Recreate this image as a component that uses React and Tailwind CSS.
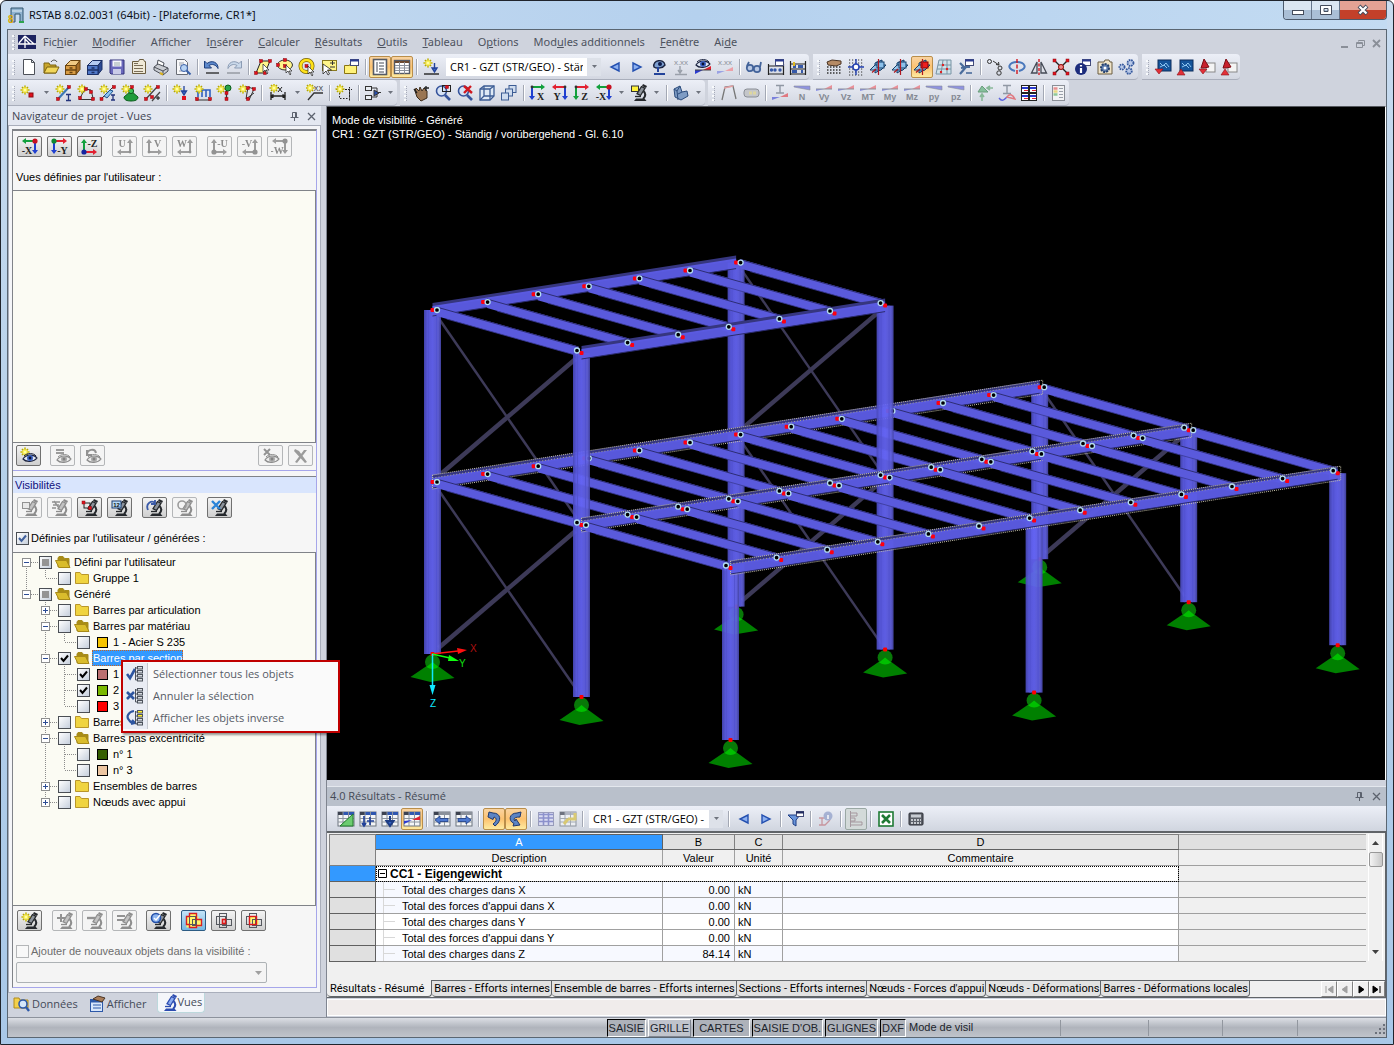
import { useState } from 'react'
import clsx from 'clsx'

/* ---------- icon parts ---------- */

const Star = ({ x = 5, y = 5 }) => (
  <g transform={`translate(${x} ${y})`}>
    <path d="M0-4.5V4.5M-4.5 0H4.5M-3-3L3 3M3-3L-3 3" stroke="#b5a800" strokeWidth="1.6" />
    <path d="M0-3.5V3.5M-3.5 0H3.5M-2-2L2 2M2-2L-2 2" stroke="#fff04a" strokeWidth="1.1" />
    <circle r="1.6" fill="#ffffa0" />
  </g>
)

const Dot = ({ x, y }) => <rect x={x - 1.5} y={y - 1.5} width="3" height="3" fill="#e0101c" stroke="#8c0a10" strokeWidth=".5" />

const Scope = ({ c = '#25282c', hi = '#8c929a' }) => (
  <g>
    <path d="M13.500 7c2.500 2.500 2 5.500-.5 8" stroke={c} strokeWidth="2" fill="none" />
    <path d="M11.500 2.500l3.500 1.800-4.500 7.200-3.500-1.800z" fill={hi} stroke={c} strokeWidth="1.300" />
    <path d="M12.500 1l4 2" stroke={c} strokeWidth="2.200" />
    <path d="M5 12.500h6" stroke={c} strokeWidth="1.300" />
    <path d="M4 17l2-2.500h8.500l2 2.500z" fill={c} />
  </g>
)

const Eye = ({ x = 9, y = 9 }) => (
  <g transform={`translate(${x} ${y})`}>
    <path d="M-7 1C-4-4 4-4 7 0C4 4-4 4.500-7 1z" fill="#dfe6f4" stroke="#1c2440" strokeWidth="1.200" />
    <circle r="3" fill="#3d63c4" />
    <circle r="1.400" fill="#0a1030" />
    <path d="M-6-2C-3-5.500 4-5 6-2" stroke="#1c2440" fill="none" />
  </g>
)

const Grid = ({ x = 1, y = 2, w = 16, h = 14, head = '#2f57b0' }) => (
  <g>
    <rect x={x} y={y} width={w} height={h} fill="#f4f6f8" stroke="#6c747e" />
    <rect x={x} y={y} width={w} height="3" fill="#3c4250" />
    <rect x={x + 5} y={y} width={w - 5} height="3" fill={head} />
    <path d={`M${x} ${y + 6.5}h${w}M${x} ${y + 10}h${w}M${x + 5} ${y}v${h}M${x + 10.5} ${y}v${h}`} stroke="#8b939d" />
  </g>
)

const Lens = () => (
  <g>
    <circle cx="7.500" cy="7" r="5" fill="#d4e2f6" fillOpacity=".8" stroke="#36549c" strokeWidth="1.600" />
    <path d="M11 11l5 5" stroke="#36549c" strokeWidth="2.600" />
  </g>
)

const Cube = ({ hot }) => (
  <g strokeWidth="1">
    <path d="M6 5l7-3v9l-7 4z" fill="#7db8e6" stroke="#123c68" />
    <path d="M1 12l5-5h11l-5 5z" fill="#9ccaf0" fillOpacity=".85" stroke="#123c68" />
    <rect x="8" y="4" width="7" height="6" fill={hot ? '#f02020' : '#8cc0ea'} stroke={hot ? '#800' : '#123c68'} />
    <path d="M9.500 1v16M3 14.500L7 11" stroke="#b01820" strokeWidth="1.200" />
  </g>
)

const Wedge = ({ label, blue }) => (
  <g>
    {blue ? (
      <path d="M1 2h16v4L1 3z" fill="#8f93e0" stroke="#8a8f9a" strokeWidth=".6" />
    ) : (
      <g>
        <path d="M1 7V5h8z" fill="#8a90e6" />
        <path d="M9 5l8-4v4z" fill="#e89098" />
        <path d="M1 5h16" stroke="#8a8f9a" />
      </g>
    )}
    <text x="9" y="16" textAnchor="middle" fontSize="9" fontWeight="bold" fill="#858a94" fontFamily="Liberation Sans, sans-serif">{label}</text>
  </g>
)

// view direction icons: two arrows leaving a corner plus the axis letter
const Axis = ({ label, h = '#e22030', v = '#1f3fd0', corner = 'tl', node }) => {
  const left = corner[1] === 'l'
  const top = corner[0] === 't'
  const cx = left ? 3 : 14
  const cy = top ? 3 : 14
  const hx = left ? 16 : 1
  const vy = top ? 16 : 1
  const s = left ? -1 : 1
  const t = top ? -1 : 1
  return (
    <g>
      <path d={`M${cx} ${cy}H${hx + s * 2}`} stroke={h} strokeWidth="2" />
      <path d={`M${cx} ${cy}V${vy + t * 2}`} stroke={v} strokeWidth="2" />
      <path d={`M${hx} ${cy}l${s * 4}-3v6z`} fill={h} />
      <path d={`M${cx} ${vy}l-3 ${t * 4}h6z`} fill={v} />
      <circle cx={cx} cy={cy} r={node ? 2.6 : 1.4} fill={node || '#333'} />
      <text x={left ? 11.5 : 6} y={top ? 15.5 : 9} textAnchor="middle" fontSize="10" fontFamily="Liberation Serif, serif" fontWeight="bold" fill="#222">{label}</text>
    </g>
  )
}

const Tree3 = ({ c = '#d8dce2' }) => (
  <g fill={c} stroke="#4c525c">
    <path d="M9.500 2v13M9.500 3h2M9.500 7h2M9.500 11h2M9.500 15h2" />
    <rect x="11.500" y="1.500" width="5" height="2.500" />
    <rect x="11.500" y="5.500" width="5" height="2.500" />
    <rect x="11.500" y="9.500" width="5" height="2.500" fill="#d8dce2" />
    <rect x="11.500" y="13.500" width="5" height="2.500" fill="#d8dce2" />
  </g>
)

// three overlapping frames; mode picks what is highlighted
const Squares = ({ mode }) => (
  <g fill="none">
    {mode === 'union' && <path d="M4.500 1.500h7v3h2v3h3v7h-6v1h-9v-11h3z" fill="#fff66a" />}
    {mode === 'diff' && <path d="M4.500 4.500h7v3h2v5h-6v-2h-3z" fill="#fff66a" />}
    <rect x="1.500" y="4.500" width="9" height="8" stroke="#55585e" />
    <rect x="4.500" y="1.500" width="7" height="14" stroke="#55585e" />
    <rect x="7.500" y="7.500" width="9" height="6" stroke="#55585e" />
    {mode === 'union' && <path d="M4.500 1.500h7v6h5v6h-5v2h-7v-3h-3v-8h3z" stroke="#d82020" strokeWidth="1.400" />}
    {mode === 'inter' && <rect x="7.500" y="7.500" width="3" height="4" stroke="#e01818" strokeWidth="1.600" />}
    {mode === 'diff' && <rect x="4.500" y="4.500" width="7" height="8" stroke="#e01818" strokeWidth="1.400" />}
  </g>
)

const Folder = ({ open }) => (
  <svg viewBox="0 0 16 14" className="h-[14px] w-4 shrink-0" fill="none">
    {open ? (
      <g>
        <path d="M3 12V3l1-1.500h4l1.500 2H14V12z" fill="#a88c14" stroke="#a58a1c" />
        <path d="M4 12.500L.5 5.500h11l3.500 7z" fill="#d9bc2c" stroke="#a88a18" />
      </g>
    ) : (
      <path d="M1.500 12.500v-11H6l1.500 2h7v9z" fill="#f0d440" stroke="#b9962a" />
    )}
  </svg>
)

const bluearrow = { fill: '#4c78d0', stroke: '#1c3c84', strokeWidth: 0.8 }

const icons = {
  logo: (
    <g>
      <rect y="2" width="18" height="14" fill="#1d2360" />
      <path d="M0 11h18M7 3v12M7 3L1 10M7 3l9 8M7 6l5 5" stroke="#fff" strokeWidth="1.300" />
    </g>
  ),
  app: (
    <g>
      <path d="M4 2h12v14h-3V8H8v8H4z" fill="#8fb2cf" stroke="#31546e" />
      <path d="M5 5h10" stroke="#e4f0f8" />
      <path d="M12 16h5" stroke="#2da44e" strokeWidth="2" />
      <text x="1" y="17" fontSize="10" fontWeight="bold" fill="#e0ac00" fontFamily="Liberation Sans, sans-serif">8</text>
    </g>
  ),
  nouveau: <path d="M3.500 1.500h8l3 3v12h-11zM11.500 1.500v3h3" fill="#fff" stroke="#4c5058" />,
  ouvrir: (
    <g>
      <path d="M2 15V5h5l1 2h6v8z" fill="#c9a62c" stroke="#7b6210" />
      <path d="M2 15l3-6h12l-3 6z" fill="#f1d65a" stroke="#7b6210" />
      <path d="M9 4c2-3 5-2 6 0" stroke="#444" fill="none" />
    </g>
  ),
  projet: (
    <g stroke="#6a4410">
      <path d="M1.500 7.500l5-5h9.500l-4 5z" fill="#f0ca84" />
      <path d="M12 7.500l4-5v9l-4 5z" fill="#a8702a" />
      <rect x="1.500" y="7.500" width="10.500" height="9" fill="#d89c44" />
      <path d="M2 12h10M5.500 10h3M5.500 14.500h3" strokeWidth="1.300" />
    </g>
  ),
  blocs: (
    <g stroke="#1b2f66">
      <path d="M1.500 7.500l5-5h9.500l-4 5z" fill="#b4caf2" />
      <path d="M12 7.500l4-5v9l-4 5z" fill="#2c4a94" />
      <rect x="1.500" y="7.500" width="10.500" height="9" fill="#5078c8" />
      <path d="M2 12h10M5.500 10h3M5.500 14.500h3" strokeWidth="1.300" />
    </g>
  ),
  enregistrer: (
    <g>
      <path d="M2 2h14v14H3l-1-1z" fill="#6a68bc" stroke="#33327a" />
      <rect x="4.500" y="2.500" width="9" height="6" fill="#f6f6fc" />
      <path d="M6 5h6M6 7h6" stroke="#9aa" />
      <rect x="5" y="11" width="8" height="5" fill="#c9cbe8" />
    </g>
  ),
  notes: (
    <g>
      <path d="M2.500 3.500h6l1-2h4l1 2h1v12h-13z" fill="#efe9d8" stroke="#6b5d40" />
      <path d="M4 7.500h9M4 10.500h9M4 13.500h9M4 5.500h4" stroke="#7a6e58" />
    </g>
  ),
  imprimer: (
    <g stroke="#4b4f58">
      <path d="M5 8l1-6 6 3-1 5z" fill="#fff" />
      <path d="M2 9l4-3 10 4v3l-5 4-9-5z" fill="#c9ccd2" />
      <path d="M2 9l9 4 5-3M11 13v4" fill="none" />
      <path d="M8 15l3 1.500" stroke="#d8b020" strokeWidth="2" />
    </g>
  ),
  apercu: (
    <g>
      <path d="M2.500 1.500h8l3 3v12h-11z" fill="#f8f8fa" stroke="#6a6e76" />
      <path d="M5 5h5M5 7h3M5 13h6" stroke="#9aa0aa" />
      <circle cx="10" cy="10" r="3.500" fill="#b8d4f4" stroke="#3a60a8" />
      <path d="M12.500 12.500l4 4" stroke="#3a60a8" strokeWidth="2" />
    </g>
  ),
  annuler: (
    <g>
      <path d="M1.500 3v7h7L6 7.500c3-2 7-1 9 3C15.500 4.500 9 1.500 4 5.500z" fill="#5c88cc" stroke="#1d3f7c" />
      <path d="M3 15h13" stroke="#222" strokeWidth="1.300" />
    </g>
  ),
  retablir: (
    <g>
      <path d="M16.500 3v7h-7L12 7.500c-3-2-7-1-9 3C2.500 4.500 9 1.500 14 5.500z" fill="#c9d8ea" stroke="#8c9cb4" />
      <path d="M2 15h13" stroke="#8c9098" strokeWidth="1.300" />
    </g>
  ),
  selparal: (
    <g>
      <path d="M2 15L7 3h9l-5 12z" fill="#fff58a" stroke="#222" />
      <Dot x={2} y={15} /><Dot x={7} y={3} /><Dot x={16} y={3} /><Dot x={11} y={15} />
      <path d="M9 6v8l2-2 2 4 1-1-2-3h3z" fill="#fff" stroke="#222" strokeWidth=".7" />
    </g>
  ),
  selellipse: (
    <g>
      <ellipse cx="9" cy="7" rx="7.500" ry="5" fill="#fff58a" stroke="#333" />
      <Dot x={2} y={7} /><Dot x={9} y={2} /><Dot x={9} y={8} />
      <path d="M10 7v8l2-2 2 4 1-1-2-3h3z" fill="#fff" stroke="#222" strokeWidth=".7" />
    </g>
  ),
  selanneau: (
    <g>
      <circle cx="8.500" cy="8" r="6" fill="none" stroke="#7a6400" strokeWidth="4" />
      <circle cx="8.500" cy="8" r="6" fill="none" stroke="#ffe21a" strokeWidth="2.600" />
      <Dot x={8.5} y={8} />
      <path d="M10 8v8l2-2 2 4 1-1-2-3h3z" fill="#fff" stroke="#222" strokeWidth=".7" />
    </g>
  ),
  selfenetre: (
    <g>
      <rect x="2.500" y="2.500" width="14" height="10" fill="#fff58a" stroke="#8a7a20" />
      <path d="M10 5h5M12.500 3v4M10 9h5" stroke="#333" />
      <path d="M3 6v10l3-3 2 4 1.500-1-2-4h4z" fill="#fff" stroke="#222" strokeWidth=".8" />
    </g>
  ),
  selspec: (
    <g>
      <path d="M2.500 7.500h5l1-2h3v2h3v8h-12z" fill="#fff27a" stroke="#8a7410" />
      <rect x="8.500" y="1.500" width="8" height="6" fill="#fff" stroke="#444c78" />
      <path d="M8 2.500h9" stroke="#2c3c90" strokeWidth="2" />
    </g>
  ),
  navigateur: (
    <g>
      <rect x="2.500" y="1.500" width="13" height="15" fill="#fff" stroke="#555b66" strokeWidth="1.600" />
      <path d="M6 4v10M8 5h5M8 8h5M8 11h5M8 14h5" stroke="#444a55" />
    </g>
  ),
  tableaux: (
    <g>
      <rect x="1.500" y="2.500" width="15" height="13" fill="#fff" stroke="#555b66" strokeWidth="1.400" />
      <path d="M2 4h14" stroke="#6c4a30" strokeWidth="2" />
      <path d="M2 7.500h14M2 10h14M2 12.500h14M6.500 4v12M11.500 4v12" stroke="#8a909a" />
    </g>
  ),
  chargenouv: (
    <g>
      <Star x={6} y={5} />
      <path d="M12.500 5v6M10 10l2.500 4 2.500-4z" stroke="#23439a" strokeWidth="1.400" fill="#3c68c8" />
      <path d="M2 16h15" stroke="#222" strokeWidth="1.400" />
    </g>
  ),
  prec: <path d="M13 5v8L5 9z" fill="#8cb0f0" stroke="#2450b0" strokeWidth="1.400" />,
  suiv: <path d="M5 5v8l8-4z" fill="#8cb0f0" stroke="#2450b0" strokeWidth="1.400" />,
  vuecharge: (
    <g>
      <path d="M4 9C2 2 14 0 15 7c-2 3-8 4-11 2z" fill="#7d9fd0" stroke="#1c2440" strokeWidth="1.400" />
      <circle cx="10" cy="6" r="2" fill="#0c1a4a" />
      <path d="M8 9v5M4 16h11" stroke="#23439a" strokeWidth="2" />
    </g>
  ),
  valcharge: (
    <g>
      <text x="9" y="7" textAnchor="middle" fontSize="8" fill="#8d929c" fontFamily="Liberation Sans, sans-serif">x.xx</text>
      <path d="M8 8v6M6 12l2 3 2-3M3 16.500h12" stroke="#9aa0aa" strokeWidth="1.400" fill="none" />
    </g>
  ),
  vueres: (
    <g>
      <Eye x={9} y={6} />
      <path d="M1 16v-4h8z" fill="#2a3ad0" />
      <path d="M9 12l8-4v4z" fill="#e02030" />
      <path d="M1 12h16" stroke="#444" />
    </g>
  ),
  valres: (
    <g>
      <text x="9" y="7" textAnchor="middle" fontSize="8" fill="#8d929c" fontFamily="Liberation Sans, sans-serif">x.xx</text>
      <path d="M1 16v-3h8z" fill="#9aa2e4" />
      <path d="M9 13l8-4v4z" fill="#eca0a8" />
    </g>
  ),
  lunettes: (
    <g fill="none" stroke="#43639a" strokeWidth="1.800">
      <circle cx="5" cy="10" r="3.200" fill="#b8c8e4" />
      <circle cx="12" cy="11" r="3.200" fill="#b8c8e4" />
      <path d="M2 8l2-4M15 9l1-5M8 10h1" />
    </g>
  ),
  calcul1: (
    <g>
      <path d="M1.500 6v11M16.500 6v11M1 8h16M1 16h16" stroke="#222" strokeWidth="1.200" />
      <circle cx="4.500" cy="12" r="1.700" fill="#3558a8" /><circle cx="8" cy="12" r="1.700" fill="#3558a8" /><circle cx="13" cy="12" r="1.700" fill="#3558a8" />
      <rect x="8.500" y="1.500" width="8" height="6" fill="#fff" stroke="#444c78" />
      <path d="M8 2.500h9" stroke="#2c3c90" strokeWidth="2" />
    </g>
  ),
  calcul2: (
    <g>
      <path d="M1.500 3v14M16.500 3v14M1 6h16M1 11h16M1 16h16" stroke="#222" strokeWidth="1.200" />
      <path d="M4 8.500h3M9 8.500h5M3 13.500h5M12 13.500h2" stroke="#3558a8" strokeWidth="3" />
      <path d="M5 4v4" stroke="#e0b820" strokeWidth="2" />
    </g>
  ),
  grillemain: (
    <g>
      <path d="M2 9h14M2 12h14M2 15h14" stroke="#333" strokeDasharray="1.500 1.500" strokeWidth="1.400" />
      <path d="M2 4l5-2 9 1v3l-5 2-8-1z" fill="#b58a64" stroke="#4a3424" />
    </g>
  ),
  grille: (
    <g>
      <path d="M2 2h15M2 5h15M2 8h15M2 11h15M2 14h15M2 17h15" stroke="#333" strokeDasharray="1.200 1.800" />
      <path d="M9 1v16M1 9h16" stroke="#2340b0" strokeWidth="1.400" />
      <circle cx="9" cy="9" r="3" fill="#fff" stroke="#2340b0" strokeWidth="1.400" />
    </g>
  ),
  plan1: <Cube />,
  plan2: <Cube />,
  plan4: <Cube hot />,
  surface: (
    <g>
      <path d="M4 2h12v14H1z" fill="#cfe2ea" stroke="#7894a4" />
      <path d="M8 2L6 16M12 2v14M3 7h13M2 11h14" stroke="#7894a4" />
      <circle cx="8" cy="7" r="1.200" fill="#d22" /><circle cx="12" cy="11" r="1.200" fill="#d22" /><circle cx="6" cy="14" r="1.200" fill="#d22" />
    </g>
  ),
  outilscao: (
    <g>
      <path d="M3 16l6-7M3 5l4 4h6M9 9l-5 1" stroke="#4a6c9c" strokeWidth="2.200" />
      <rect x="8.500" y="1.500" width="8" height="6" fill="#fff" stroke="#444c78" />
      <path d="M8 2.500h9" stroke="#2c3c90" strokeWidth="2" />
      <path d="M9 15h6" stroke="#4a6c9c" strokeWidth="1.600" />
    </g>
  ),
  copier: (
    <g fill="none" stroke="#333">
      <circle cx="3.500" cy="3.500" r="2" /><circle cx="14" cy="10" r="2" /><circle cx="13" cy="15" r="2.200" />
      <path d="M7 3l6 4M13 7l-3-.5M13 7l-.5-3" />
    </g>
  ),
  pivoter: (
    <g fill="none">
      <path d="M7 13C-3 10 2 4 9 4s12 6 2 9" stroke="#4a78bc" strokeWidth="2" />
      <path d="M9 1v16" stroke="#d01820" strokeWidth="1.400" strokeDasharray="4 1.500" />
    </g>
  ),
  miroir: (
    <g fill="none">
      <path d="M7 15V4L1.500 15zM11 15V4l5.500 11z" stroke="#444a55" strokeWidth="1.300" />
      <path d="M9 1v16" stroke="#d01820" strokeWidth="1.400" strokeDasharray="3 1.500" />
    </g>
  ),
  connecter: (
    <g>
      <path d="M2 2l14 14M16 2L2 16" stroke="#222" strokeWidth="1.400" />
      <circle cx="9" cy="9" r="2.500" fill="#e88" stroke="#900" />
      <Dot x={2.5} y={2.5} /><Dot x={15.5} y={2.5} /><Dot x={2.5} y={15.5} /><Dot x={15.5} y={15.5} />
    </g>
  ),
  info: (
    <g>
      <rect x="8.500" y="1.500" width="8" height="6" fill="#fff" stroke="#444c78" />
      <path d="M8 2.500h9" stroke="#2c3c90" strokeWidth="2" />
      <circle cx="7" cy="11" r="6" fill="#1c2c7c" />
      <path d="M7 10v5M7 7v1.500" stroke="#fff" strokeWidth="2.200" />
    </g>
  ),
  module: (
    <g>
      <path d="M2 4h6l1-2h4l1 2h2v12H2z" fill="#efe3c8" stroke="#6b5d40" />
      <circle cx="9" cy="10" r="4" fill="#5d7cae" stroke="#26406c" strokeWidth="2" strokeDasharray="2 1" />
      <circle cx="9" cy="10" r="1.500" fill="#fff" />
    </g>
  ),
  engrenages: (
    <g fill="#b9c9e8" stroke="#35589c" strokeWidth="1.800" strokeDasharray="1.600 .8">
      <circle cx="4" cy="9" r="2.600" /><circle cx="12.500" cy="5" r="3" /><circle cx="11" cy="13" r="2.800" />
    </g>
  ),
  dxf1: (
    <g>
      <rect x="4" y="2" width="13" height="11" fill="#15549a" stroke="#0c2c5c" />
      <path d="M6 5l3 3 3-3 3 4M6 9l4-2 3 3" stroke="#8cc4f0" fill="none" />
      <path d="M1 11h8l-4 5z" fill="#e23038" stroke="#8c1018" strokeWidth=".6" />
    </g>
  ),
  dxf2: (
    <g>
      <rect x="4" y="2" width="13" height="11" fill="#15549a" stroke="#0c2c5c" />
      <path d="M6 5l3 3 3-3 3 4M6 9l4-2 3 3" stroke="#8cc4f0" fill="none" />
      <path d="M1 17h8l-4-6z" fill="#e23038" stroke="#8c1018" strokeWidth=".6" />
    </g>
  ),
  pdf1: (
    <g>
      <rect x="8" y="5" width="9" height="9" fill="#f4f4f4" stroke="#888" />
      <path d="M3 10L6 1l5 8-5 1z" fill="#c8202c" stroke="#7c0c14" />
      <path d="M1 11h8l-4 5z" fill="#e23038" stroke="#8c1018" strokeWidth=".6" />
    </g>
  ),
  pdf2: (
    <g>
      <rect x="8" y="5" width="9" height="9" fill="#f4f4f4" stroke="#888" />
      <path d="M3 10L6 1l5 8-5 1z" fill="#c8202c" stroke="#7c0c14" />
      <path d="M1 17h8l-4-6z" fill="#e23038" stroke="#8c1018" strokeWidth=".6" />
    </g>
  ),

  noeud: <g><Star x={5} y={6} /><rect x="9" y="9" width="4" height="4" fill="#e0101c" stroke="#8c0a10" /></g>,
  barre: (
    <g>
      <path d="M3 15L14 3" stroke="#3c78b4" strokeWidth="2.200" /><Star />
      <Dot x={3} y={15} /><Dot x={14} y={3} />
      <path d="M11 10.500h5M13.500 10.500v6M11 16.500h5" stroke="#23337c" strokeWidth="1.300" />
    </g>
  ),
  barres: (
    <g>
      <path d="M3 14L8 5l6 1 2 8M2 15.500h14" stroke="#333" fill="none" /><Star />
      <Dot x={3} y={14} /><Dot x={9} y={5} /><Dot x={14} y={8} /><Dot x={16} y={15} />
    </g>
  ),
  barrebleue: (
    <g>
      <path d="M2 15L14 3" stroke="#333" />
      <path d="M5 12l6-6 3 1-6 7z" fill="#8cc4f0" stroke="#1c5490" /><Star />
      <Dot x={2.5} y={15} /><Dot x={15} y={3} />
      <path d="M12 11h4M14 11v5M12 16h4" stroke="#23337c" strokeWidth="1.300" />
    </g>
  ),
  appui: (
    <g>
      <path d="M10 7l7 6c0 3-3 4-7 4s-7-1-7-4z" fill="#1f9c3c" stroke="#0c5c1c" />
      <circle cx="10" cy="7" r="2.600" fill="#38c058" stroke="#0c5c1c" /><Star /><Dot x={11} y={3} />
    </g>
  ),
  excentricite: (
    <g>
      <path d="M3 15L14 3M9 17L17 8" stroke="#444" strokeWidth="1.300" /><Star />
      <Dot x={3} y={15} /><Dot x={15} y={3} /><Dot x={9} y={13} /><path d="M13 14h4M15 12v4" stroke="#111" />
    </g>
  ),
  chargenod: <g><Star /><path d="M12 2v6M9.500 7l2.500 4 2.500-4z" stroke="#23439a" fill="#3c68c8" strokeWidth="1.300" /><rect x="10" y="12" width="4" height="4" fill="#e0101c" /></g>,
  chargebarre: (
    <g>
      <path d="M4 6h12v7M4 6v7M8 6v7M12 6v7" stroke="#3060c0" strokeWidth="1.600" fill="none" /><Star />
      <path d="M2 16h15" stroke="#333" /><Dot x={3} y={15} /><Dot x={16} y={15} />
    </g>
  ),
  chargeappui: <g><Star /><circle cx="12" cy="4" r="3" fill="#2aa448" stroke="#0c5c1c" /><path d="M10.500 7v9" stroke="#333" strokeWidth="1.300" /><Dot x={10.5} y={9} /><Dot x={10.5} y={15} /></g>,
  imperfection: <g><path d="M10 3l6 2-5 11M10 3L8 15l8-6" stroke="#333" fill="none" /><Star /><Dot x={10} y={4} /><Dot x={10} y={15} /><Dot x={16} y={5} /></g>,
  cote: <g><path d="M2 8v8M16 8v8M2 12h14M4.500 10.500L2 12l2.500 1.500M13.500 10.500L16 12l-2.500 1.500" stroke="#222" strokeWidth="1.300" fill="none" /><Star x={5} y={4} /><path d="M9 3l4 5M13 3L9 8" stroke="#222" /></g>,
  repere: <g><path d="M2 16l6-7h9" stroke="#333" fill="none" strokeWidth="1.300" /><Star x={4} y={4} /><text x="12.500" y="7" textAnchor="middle" fontSize="7" fill="#333" fontFamily="Liberation Sans, sans-serif">XX</text></g>,
  lignesguides: <g><rect x="4.500" y="5.500" width="10" height="9" fill="none" stroke="#222" strokeDasharray="1.500 1.500" /><path d="M1 5.500h16M14.500 3v14" stroke="#222" strokeDasharray="1.500 1.500" /><Star x={5} y={5} /></g>,
  liens: <g fill="#e8ecf2" stroke="#333"><rect x="1.500" y="2.500" width="6" height="4" /><rect x="1.500" y="11.500" width="6" height="4" /><path d="M8 4h5v9H8M13 8.500h4" fill="none" /><path d="M10 6l5 3-5 3z" fill="#2c50a8" /></g>,
  main: <g><path d="M3 7l2 6 4 4 6-3V7l-3-3-2 3-2-4-1 4-3-3z" fill="#9a7654" stroke="#3c2c1c" /><path d="M2 5l3 4M14 2v5M12 4h5" stroke="#222" strokeWidth="1.300" /></g>,
  zoomfenetre: <g><Lens /><rect x="8.500" y="1.500" width="8" height="6" fill="none" stroke="#222" /><Dot x={13} y={3} /></g>,
  zoomtout: <g><Lens /><path d="M8 2l8 7M15 2L8 9" stroke="#d01820" strokeWidth="2.400" /></g>,
  vueiso: <g fill="#dfeaf6" stroke="#3c5c94" strokeWidth="1.300"><path d="M2 5l4-3h10v10l-4 4H2z" /><path d="M2 5h10v11M12 5l4-3M6 2v10h10M6 12l-4 4" fill="none" /></g>,
  vues3d: <g fill="#cfdcee" stroke="#3c5c94"><rect x="9" y="1.500" width="7" height="7" /><rect x="5.500" y="5" width="7" height="7" /><rect x="1.500" y="9" width="7" height="7" /></g>,
  axex: <Axis label="X" h="#12a03c" />,
  axey: <Axis label="Y" corner="tr" />,
  axez: <Axis label="Z" v="#12a03c" />,
  axemx: <Axis label="-X" h="#12a03c" corner="tr" node="#c81020" />,
  axemy: <Axis label="-Y" node="#108830" />,
  axemz: <Axis label="-Z" v="#12a03c" corner="bl" node="#1424a0" />,
  axeu: <Axis label="U" corner="br" />,
  axev: <Axis label="V" corner="bl" />,
  axew: <Axis label="W" corner="br" />,
  axemu: <Axis label="-U" corner="bl" node="#333" />,
  axemv: <Axis label="-V" corner="br" node="#333" />,
  axemw: <Axis label="-W" corner="tr" node="#333" />,
  visibilite: <g><Scope /><rect x="1.500" y="2" width="7" height="5.500" fill="#fff23a" stroke="#333" /></g>,
  rendu: <g stroke="#2c4c7c"><path d="M2 5l6-3 2 6 5-1 1 5-7 4-6-3z" fill="#7f9cc4" /><path d="M2 5l3 2 1 9M8 2L5 7M10 8l-4 2" fill="none" /></g>,
  portique: <g><path d="M2 16L5 3l8-1 3 13" stroke="#777" fill="none" strokeWidth="1.300" /><path d="M4 4l9-2" stroke="#e4a0a4" strokeWidth="1.600" /></g>,
  cylindre: <g><rect x="2" y="5" width="15" height="8" rx="3" fill="#c4c6ca" stroke="#8a8e96" /><path d="M7 9h3M11 9h3" stroke="#ddd6a0" strokeWidth="3" /></g>,
  deform: <g><path d="M5 1.500h8M9 1.500v7M5 9h8" stroke="#9098a4" strokeWidth="1.400" /><path d="M1 16v-3h8z" fill="#7a80dc" /><path d="M9 13l8-4v4z" fill="#e07880" /></g>,
  n: <Wedge label="N" blue />,
  vy: <Wedge label="Vy" />,
  vz: <Wedge label="Vz" />,
  mt: <Wedge label="MT" />,
  my: <Wedge label="My" />,
  mz: <Wedge label="Mz" />,
  py: <Wedge label="py" blue />,
  pz: <Wedge label="pz" blue />,
  reaction: <g><path d="M6 2l6 6H2z" fill="#86c09c" stroke="#6a9c7c" /><path d="M17 4h-5M14 2l-3 2 3 2M6 17v-6M4 13l2-3 2 3" stroke="#88b898" strokeWidth="1.600" fill="none" /></g>,
  sectionres: <g fill="none"><path d="M5 1.500h8M9 1.500v8M5 9.500h8" stroke="#9098a4" strokeWidth="1.400" /><path d="M1 14c3 4 5 2 8-1" stroke="#5c64e0" strokeWidth="1.400" /><path d="M9 13c3-4 6-2 8 2z" stroke="#e07880" strokeWidth="1.400" /></g>,
  fenetres: <g fill="#fff" stroke="#222"><rect x="1.500" y="1.500" width="7" height="7" /><rect x="9.500" y="1.500" width="7" height="7" /><rect x="1.500" y="9.500" width="7" height="7" /><rect x="9.500" y="9.500" width="7" height="7" /><path d="M2 4h6M10 4h6M2 12h6M10 12h6" stroke="#2a3ad0" strokeWidth="2" /><path d="M4 6.500h4M12 6.500h4M4 14.500h4M12 14.500h4" stroke="#e02030" /></g>,
  palette: <g><rect x="3.500" y="1.500" width="12" height="15" fill="#f2f3f5" stroke="#8a8e96" /><path d="M4.500 4.500h4" stroke="#e89090" strokeWidth="2.500" /><path d="M4.500 7.500h4" stroke="#e8d880" strokeWidth="2.500" /><path d="M4.500 10.500h4" stroke="#90c898" strokeWidth="2.500" /><path d="M10 4.500h4M10 7.500h4M10 10.500h4M10 13.500h4" stroke="#9aa0aa" /></g>,

  nouvoeil: <g><Star x={5} y={5} /><Eye x={10} y={11} /></g>,
  listeoeil: <g><path d="M2 3h8M2 6h8" stroke="#444" strokeWidth="2" /><Eye x={10} y={12} /></g>,
  majoeil: <g><path d="M3 8c0-6 8-7 9-2M3 3v5h5" stroke="#333" strokeWidth="2" fill="none" /><Eye x={10} y={12} /></g>,
  suppoeil: <g><path d="M2 2l6 6M8 2L2 8" stroke="#333" strokeWidth="2" /><Eye x={10} y={12} /></g>,
  supprimer: <path d="M3 2l4 2 8 11-2 1L2 4zM15 3L5 16l-2-1L12 3z" fill="#444" />,
  scope1: <g><Scope /><rect x="1.500" y="3.500" width="7" height="6" fill="#ddd" stroke="#333" /></g>,
  scope2: <g><Scope /><path d="M1 3h8M2 6h6M1 9h4M3 2l5 7" stroke="#333" strokeWidth="1.400" /></g>,
  scope3: <g><Scope /><rect x="3" y="4" width="6" height="5" fill="none" stroke="#222" /><Dot x={2.5} y={3.5} /><Dot x={9} y={9} /></g>,
  scope4: <g><Scope /><rect x="1" y="2" width="9" height="7" fill="#b8dcf8" stroke="#1c3c70" /><text x="5.500" y="8" textAnchor="middle" fontSize="6" fontWeight="bold" fill="#111" fontFamily="Liberation Sans, sans-serif">12</text></g>,
  scope5: <g><Scope /><path d="M2 11C-1 4 6 1 9 4M9 1v4H5" stroke="#3a5aa8" strokeWidth="1.800" fill="none" /></g>,
  scope6: <g><Scope /><circle cx="6" cy="6" r="4" fill="none" stroke="#444" strokeWidth="1.600" /></g>,
  scope7: <g><Scope /><path d="M1 2l8 8M9 2L1 10" stroke="#2a84d8" strokeWidth="2.400" /></g>,
  scopenouv: <g><Scope /><Star x={5} y={5} /></g>,
  scopeplus: <g><Scope /><path d="M1 6h8M5 2v8" stroke="#333" strokeWidth="2" /></g>,
  scopemoins: <g><Scope /><path d="M1 6h8" stroke="#333" strokeWidth="2.400" /></g>,
  scopeegal: <g><Scope /><path d="M1 4h8M1 8h8" stroke="#333" strokeWidth="2" /></g>,
  scopemaj: <g><Scope /><circle cx="6" cy="6" r="4.500" fill="#8cb4f0" stroke="#2450a8" strokeWidth="1.600" /><path d="M4 6l2 2 4-5" stroke="#fff" fill="none" strokeWidth="1.500" /></g>,
  union: <Squares mode="union" />,
  inter: <Squares mode="inter" />,
  diff: <Squares mode="diff" />,
  menusel: <g><path d="M1 9l3 4 5-9" stroke="#2e55a0" strokeWidth="2.600" fill="none" /><Tree3 /></g>,
  menuann: <g><path d="M1 5l7 7M8 5l-7 7" stroke="#2e55a0" strokeWidth="2.600" /><Tree3 /></g>,
  menuinv: <g><path d="M8 2C2 3 0 8 3 11c1 2 3 3 5 3M5 15l4-1-3-3" stroke="#2e55a0" strokeWidth="2.200" fill="none" /><Tree3 c="#fff02a" /></g>,

  tabdonnees: <g><path d="M1 13V3h5l1 2h8v8z" fill="#f3d04a" stroke="#b08a1c" /><circle cx="10" cy="9" r="4" fill="#d4e6fa" stroke="#2c58a8" strokeWidth="1.600" /><path d="M13 12l3 4" stroke="#2c58a8" strokeWidth="2.400" /></g>,
  tabafficher: <g><rect x="2.500" y="4.500" width="12" height="12" fill="#d7e6fb" stroke="#2c58a8" /><path d="M3 6h11" stroke="#2c58a8" strokeWidth="3" /><path d="M5 10h8M5 13h8" stroke="#2c58a8" /><path d="M5 4l5-3 7 2-3 4z" fill="#a87c58" stroke="#4a3424" /></g>,
  tabvues: <Scope c="#2c4cb0" hi="#8cacf0" />,

  res1: <g><Grid /><path d="M3 16L16 4v12z" fill="#6ccc70" stroke="#207a2c" /></g>,
  res2: <g><Grid /><path d="M5 6v9M3 13l2 3 2-3M11 7v8M8 11h7" stroke="#1f3f98" strokeWidth="1.600" fill="none" /></g>,
  res3: <g><Grid /><path d="M9 6v6M5.500 11h7L9 16z" fill="#3462c4" stroke="#1c3c84" strokeWidth="2" /></g>,
  res4: <g><Grid /><path d="M1 14v-3l8-1z" fill="#2a3ad0" /><path d="M9 10l8-4v4z" fill="#e02030" /></g>,
  res5: <g><Grid head="#8a909a" /><path d="M2 10l5-4v2.500h8v3H7V14z" {...bluearrow} /></g>,
  res6: <g><Grid head="#8a909a" /><path d="M16 10l-5-4v2.500H3v3h8V14z" {...bluearrow} /></g>,
  res7: <path d="M4 2l4 1c8 0 9 8 2 13l-2-2c4-3 4-6 1-7l-1 2.500L3 7z" fill="#5c84c4" stroke="#20386c" />,
  res8: <path d="M14 2L10 3C2 3 1 11 7 13.500L6 16l7-1-4-6-1 2C6 9 7 7 13 7z" fill="#5c84c4" stroke="#20386c" />,
  res9: <g opacity=".7"><rect x="1.500" y="2.500" width="15" height="13" fill="#d8daf4" stroke="#7c80a8" /><path d="M2 4.500h14M2 8h14M2 11.500h14M6.500 3v12M11.500 3v12" stroke="#6a70c0" strokeWidth="1.600" /></g>,
  res10: <g opacity=".7"><Grid head="#9ca2b0" /><path d="M9 9h7V3M5 14l4-5" stroke="#d8c040" strokeWidth="3" fill="none" /></g>,
  filtre: <g><path d="M1 5h12L9 10v6l-3-2v-4z" fill="#6a96dc" stroke="#1c3c84" /><rect x="9.500" y="1.500" width="7" height="5" fill="#fff" stroke="#444c78" /><path d="M9 2.500h8" stroke="#222c60" strokeWidth="2" /></g>,
  infores: <g opacity=".7"><path d="M2 8h6M5 8v7M2 15h6l5-5" stroke="#c07880" fill="none" strokeWidth="1.300" /><circle cx="11" cy="6" r="4.500" fill="#8c9cc8" /><path d="M11 5v4" stroke="#fff" strokeWidth="1.600" /></g>,
  diagram: <g stroke="#a09098" fill="none" opacity=".9"><path d="M3.500 1v16M4 3h6v3H4M4 8h4v3H4M4 12h11v3H4" /></g>,
  excel: <g><rect x="2" y="2" width="14" height="14" fill="#fff" stroke="#1f7a34" strokeWidth="1.600" /><path d="M5 5l8 8M13 5l-8 8" stroke="#1f7a34" strokeWidth="2.600" /></g>,
  calculette: <g><rect x="2" y="3" width="14" height="12" rx="1" fill="#5c6068" stroke="#2c2f36" /><rect x="4" y="4.500" width="10" height="3" fill="#c8ccd2" /><path d="M4 10h10M4 13h10" stroke="#e8eaee" strokeWidth="1.600" strokeDasharray="2 1" /></g>,
}

const Icon = ({ name, className }) => (
  <svg viewBox="0 0 18 18" fill="none" className={clsx('h-[18px] w-[18px] shrink-0', className)} aria-hidden="true">
    {icons[name]}
  </svg>
)

/* ---------- small controls ---------- */

const ToolButton = ({ name, on, pale, wide }) => (
  <button
    type="button"
    aria-label={name}
    className={clsx(
      'flex h-[22px] shrink-0 items-center justify-center',
      wide ? 'w-[26px]' : 'w-[22px]',
      on && 'rounded-xs border border-[#b98e4a] bg-linear-to-b from-[#f9d3a0] via-[#fcc270] to-[#fdeaa0]',
      pale && 'rounded-xs border border-[#9aa8a4] bg-[#d3dad9]'
    )}
  >
    <Icon name={name} />
  </button>
)

const Sep = ({ wide }) => (
  <span className={clsx('flex h-4 shrink-0 justify-center', wide ? 'w-2' : 'w-[7px]')}>
    <span className="w-px bg-[#a3a8b4]" />
    <span className="w-px bg-white" />
  </span>
)

const Drop = () => (
  <button type="button" aria-label="plus" className="flex h-[22px] w-[13px] shrink-0 items-center justify-center">
    <svg viewBox="0 0 5 3" className="h-[3px] w-[5px]"><path d="M0 0h5L2.500 3z" fill="#6e737d" /></svg>
  </button>
)

const Grip = () => (
  <span className="flex h-4 w-[10px] shrink-0 justify-center pt-px">
    <span className="border-l-2 border-dotted border-[#f8fafc]" />
    <span className="border-l border-dotted border-[#a6abb8]" />
  </span>
)

const LoadCase = ({ className }) => (
  <span className={clsx('grid h-[18px] shrink-0 bg-white', className)}>
    <select
      aria-label="Cas de charge"
      className="col-start-1 row-start-1 w-full appearance-none overflow-hidden bg-transparent pr-[18px] pl-1 text-[11px] leading-[18px] text-black"
    >
      <option>CR1 - GZT (STR/GEO) - Ständig / vorübergehend</option>
    </select>
    <span className="pointer-events-none col-start-1 row-start-1 flex w-[14px] items-center justify-center justify-self-end bg-[#dde1e9]">
      <svg viewBox="0 0 5 3" className="h-[3px] w-[5px]"><path d="M0 0h5L2.500 3z" fill="#6e737d" /></svg>
    </span>
  </span>
)

// '|' separator, 'v' drop-down arrow, '*' pressed, '~' pressed and greyed
const renderTools = (list, wide) =>
  list.split(' ').map((t, i) => {
    if (t === '|') return <Sep key={i} wide={wide} />
    if (t === 'v') return <Drop key={i} />
    if (t === 'combo') return <LoadCase key={i} className={wide ? 'mx-[2px] w-[134px]' : 'mr-[3px] ml-1 w-[155px]'} />
    if (t[0] === '*') return <ToolButton key={i} name={t.slice(1)} on />
    if (t[0] === '~') return <ToolButton key={i} name={t.slice(1)} pale />
    return <ToolButton key={i} name={t} wide={t === 'cote'} />
  })

const Strip = ({ tools }) => (
  <div className="flex h-[26px] items-center rounded-r-sm border-b border-[#a9aebb] bg-linear-to-b from-[#eceff7] to-[#d3d7e1]">
    <Grip />
    {renderTools(tools)}
  </div>
)

const PanelButton = ({ name, off, on, className }) => (
  <button
    type="button"
    aria-label={name}
    disabled={off}
    className={clsx(
      'flex h-[21px] w-[25px] shrink-0 items-center justify-center rounded-xs border',
      off && 'border-[#b4b6b8] bg-[#f4f4f4]',
      on && 'border-[#2c5c84] bg-linear-to-b from-[#c4e4f8] to-[#74b8e4]',
      !off && !on && 'border-[#707070] bg-linear-to-b from-[#f4f4f4] to-[#cfcfcf]',
      className
    )}
  >
    <Icon name={name} className={off ? 'opacity-50 grayscale' : ''} />
  </button>
)

const Tick = ({ id, checked, mixed, disabled, label, blue }) => {
  const [on, setOn] = useState(!!checked)
  return (
    <span className="grid shrink-0">
      <input
        id={id}
        type="checkbox"
        aria-label={label}
        checked={on}
        disabled={disabled}
        onChange={() => setOn(!on)}
        className={clsx(
          'col-start-1 row-start-1 h-[13px] w-[13px] appearance-none border',
          disabled ? 'border-[#b4b6b8] bg-[#f8f8f8]' : 'border-[#4a4e54] bg-linear-to-br from-white to-[#c6cfdc]'
        )}
      />
      {mixed && <span className="pointer-events-none col-start-1 row-start-1 m-[3px] bg-[#949494]" />}
      {on && !mixed && (
        <svg viewBox="0 0 13 13" className="pointer-events-none col-start-1 row-start-1 h-[13px] w-[13px]" fill="none">
          <path d="M3 6l2.500 3L10 3.500" stroke={blue ? '#40609c' : '#000'} strokeWidth="2" />
        </svg>
      )}
    </span>
  )
}

const PinClose = () => (
  <span className="flex items-center gap-2">
    <button type="button" aria-label="Épingler">
      <svg viewBox="0 0 9 9" className="h-[9px] w-[9px]" fill="none"><path d="M2.500 5.500v-5h4v5M5.500.5v5M.5 5.500h8M4.500 5.500V9" stroke="#5c626e" /></svg>
    </button>
    <button type="button" aria-label="Fermer">
      <svg viewBox="0 0 9 9" className="h-[9px] w-[9px]" fill="none"><path d="M1 1l7 7M8 1L1 8" stroke="#5c626e" strokeWidth="1.300" /></svg>
    </button>
  </span>
)

/* ---------- title, menus, toolbars ---------- */

const menus = [
  ['Fic', 'h', 'ier'], ['', 'M', 'odifier'], ['Aff', 'i', 'cher'], ['I', 'n', 'sérer'], ['', 'C', 'alculer'],
  ['', 'R', 'ésultats'], ['', 'O', 'utils'], ['', 'T', 'ableau'], ['O', 'p', 'tions'], ['Mod', 'u', 'les additionnels'],
  ['', 'F', 'enêtre'], ['Ai', 'd', 'e'],
]

const TitleBar = () => (
  <header className="flex h-7 shrink-0 items-start justify-between bg-linear-to-r from-[#c9dcf0] via-[#b5d1ee] to-[#c3dbf2]">
    <div className="flex h-7 items-center gap-1 text-[#0c1018]">
      <Icon name="app" />
      <h1 className="font-['Noto_Sans',sans-serif] text-[11px]">RSTAB 8.02.0031 (64bit) - [Plateforme, CR1*]</h1>
    </div>
    <div className="flex h-[19px] overflow-hidden rounded-b border border-t-0 border-[#4c5a6c]">
      <button type="button" aria-label="Réduire" className="flex w-7 items-center justify-center border-r border-[#66758a] bg-linear-to-b from-[#dbe6f2] from-50% to-[#aabfd6] to-50%">
        <svg viewBox="0 0 14 12" className="h-3 w-[14px]"><rect x="1.500" y="6.500" width="11" height="4" fill="#fff" stroke="#444c5c" /></svg>
      </button>
      <button type="button" aria-label="Agrandir" className="flex w-7 items-center justify-center border-r border-[#66758a] bg-linear-to-b from-[#dbe6f2] from-50% to-[#aabfd6] to-50%">
        <svg viewBox="0 0 14 12" className="h-3 w-[14px]"><path d="M1.500 1.500h11v9h-11zM5 4.500v3h4v-3z" fill="#fff" stroke="#444c5c" fillRule="evenodd" /></svg>
      </button>
      <button type="button" aria-label="Fermer" className="flex w-[46px] items-center justify-center bg-linear-to-b from-[#e3a294] from-50% to-[#c3402a] to-50%">
        <svg viewBox="0 0 14 12" className="h-3 w-[14px]"><path d="M3 2l8 8M11 2l-8 8" stroke="#444c5c" strokeWidth="4" /><path d="M3.500 2.500l7 7M10.500 2.500l-7 7" stroke="#fff" strokeWidth="2.200" /></svg>
      </button>
    </div>
  </header>
)

const MenuBar = () => (
  <nav className="flex h-6 shrink-0 items-center">
    <Grip />
    <Icon name="logo" />
    <ul className="flex flex-1 gap-[15px] pl-[7px] font-['Noto_Sans',sans-serif] text-[11px] text-[#4d525e]">
      {menus.map(([a, b, c]) => (
        <li key={a + b + c}>
          <button type="button">{a}<u>{b}</u>{c}</button>
        </li>
      ))}
    </ul>
    <div className="flex items-center gap-[7px] pt-[3px] pr-[5px] text-[#8a8f98]">
      <button type="button" aria-label="Réduire"><svg viewBox="0 0 9 9" className="h-[9px] w-[9px]"><path d="M1 8h7" stroke="currentColor" strokeWidth="2" /></svg></button>
      <button type="button" aria-label="Restaurer"><svg viewBox="0 0 9 9" className="h-[9px] w-[9px]" fill="none"><path d="M2.500 2.500v-1h6v5h-2M.5 3.500h6v5h-6zM.5 4.500h6" stroke="currentColor" /></svg></button>
      <button type="button" aria-label="Fermer"><svg viewBox="0 0 9 9" className="h-[9px] w-[9px]"><path d="M1 1l7 7M8 1L1 8" stroke="currentColor" strokeWidth="1.800" /></svg></button>
    </div>
  </nav>
)

const Toolbars = () => (
  <div className="shrink-0">
    <div className="flex h-[26px] gap-1">
      <Strip tools="nouveau ouvrir projet blocs enregistrer notes imprimer apercu | annuler retablir | selparal selellipse selanneau selfenetre selspec | *navigateur *tableaux | chargenouv combo prec suiv vuecharge valcharge vueres valres | lunettes calcul1 calcul2" />
      <Strip tools="grillemain grille plan1 plan2 *plan4 surface outilscao | copier pivoter miroir connecter info module engrenages" />
      <Strip tools="dxf1 dxf2 pdf1 pdf2" />
    </div>
    <div className="flex h-[26px] gap-[3px]">
      <Strip tools="noeud v barre barres barrebleue appui excentricite | chargenod chargebarre chargeappui imperfection | cote v repere | lignesguides | liens v" />
      <Strip tools="main zoomfenetre zoomtout vueiso vues3d | axex axey axez axemx v visibilite v | rendu v" />
      <Strip tools="portique cylindre | deform n vy vz mt my mz py pz | reaction sectionres fenetres | palette" />
    </div>
  </div>
)

/* ---------- navigator ---------- */

// g: one letter per column, '|' line through, 'L' last branch, 'T' branch, ' ' nothing
// box: '+' or '-' expander in the last column
const tree = [
  { g: 'T', box: '-', top: true, mixed: true, folder: 'open', text: "Défini par l'utilisateur" },
  { g: '|L', folder: 'closed', text: 'Gruppe 1' },
  { g: 'L', box: '-', mixed: true, folder: 'open', text: 'Généré' },
  { g: ' T', box: '+', folder: 'closed', text: 'Barres par articulation' },
  { g: ' T', box: '-', folder: 'open', text: 'Barres par matériau' },
  { g: ' |L', color: '#f5c400', text: '1 - Acier S 235' },
  { g: ' T', box: '-', checked: true, folder: 'open', text: 'Barres par section', selected: true },
  { g: ' |T', checked: true, color: '#bb7070', text: '1' },
  { g: ' |T', checked: true, color: '#7ab800', text: '2' },
  { g: ' |L', color: '#ff0000', text: '3' },
  { g: ' T', box: '+', folder: 'closed', text: 'Barres' },
  { g: ' T', box: '-', folder: 'open', text: 'Barres pas excentricité' },
  { g: ' |T', color: '#355e00', text: 'n° 1' },
  { g: ' |L', color: '#ecc5a0', text: 'n° 3' },
  { g: ' T', box: '+', folder: 'closed', text: 'Ensembles de barres' },
  { g: ' L', box: '+', folder: 'closed', text: 'Nœuds avec appui' },
]

const Guide = ({ kind, box, last, top }) => (
  <svg viewBox={last ? '0 0 17 16' : '0 0 19 16'} className={clsx('h-4 shrink-0', last ? 'w-[17px]' : 'w-[19px]')} fill="none">
    <g stroke="#8c8c8c" strokeDasharray="1 1">
      {kind !== ' ' && !top && <path d="M4.500 0v8" />}
      {(kind === '|' || kind === 'T') && <path d="M4.500 8v8" />}
      {(kind === 'T' || kind === 'L') && <path d="M5 8.500h11" />}
    </g>
    {box && (
      <g>
        <rect x=".5" y="4.500" width="8" height="8" fill="#fff" stroke="#8e8f8f" />
        <path d={box === '+' ? 'M2 8.500h5M4.500 6v5' : 'M2 8.500h5'} stroke="#2c4c94" />
      </g>
    )}
  </svg>
)

const ContextMenu = () => (
  <ul className="absolute top-[10px] left-[108px] z-50 w-[219px] border-2 border-[#c00000] bg-[#fafafa] pt-px pb-[2px] shadow-[2px_2px_2px_rgba(0,0,0,0.4)]">
    {[['menusel', 'Sélectionner tous les objets'], ['menuann', 'Annuler la sélection'], ['menuinv', 'Afficher les objets inverse']].map(([icon, text]) => (
      <li key={icon}>
        <button type="button" className="flex h-[22px] w-full items-center font-['Open_Sans',sans-serif] text-[11px] text-[#565b66]">
          <span className="mr-[5px] flex h-full w-[25px] items-center justify-center border-r border-[#c5c8ce] bg-[#e9ecf4]"><Icon name={icon} /></span>
          {text}
        </button>
      </li>
    ))}
  </ul>
)

const TreeRow = ({ row }) => (
  <li className="relative flex h-4 items-center pl-[9px]">
    {row.g.split('').map((k, i) => {
      const last = i === row.g.length - 1
      return <Guide key={i} kind={k} last={last} top={row.top} box={last ? row.box : null} />
    })}
    <Tick checked={row.checked} mixed={row.mixed} label={row.text} />
    {row.folder ? (
      <span className="ml-[3px] flex w-[18px]"><Folder open={row.folder === 'open'} /></span>
    ) : (
      <span className="mr-1 ml-[7px] h-[11px] w-[11px] shrink-0 border border-black" style={{ backgroundColor: row.color }} />
    )}
    <span className={clsx('px-px leading-4 whitespace-nowrap', row.selected && 'bg-[#3399ff] text-white outline-1 -outline-offset-1 outline-[#c86420] outline-dotted')}>
      {row.text}
    </span>
    {row.selected && <ContextMenu />}
  </li>
)

const Navigator = () => (
  <aside className="flex w-[313px] shrink-0 flex-col">
    <div className="flex h-5 shrink-0 items-center justify-between border-b border-[#a9aebb] bg-[#e4e8f1] pt-px pr-[5px] pl-1 text-[11px] text-[#3f4552]">
      <h2>Navigateur de projet - Vues</h2>
      <PinClose />
    </div>
    <div className="flex min-h-0 flex-1 flex-col border-x border-b border-[#a9aebb] bg-[#f4f5f8] px-[3px] pt-[3px] pb-1">
      <div className="flex min-h-0 flex-1 flex-col border border-t-2 border-[#808388] border-r-[#a6a6ea] border-b-[#a6a6ea] bg-[#f6f6f6] font-['Liberation_Sans',Arial,sans-serif] text-[11px] text-black">
        <div className="flex shrink-0 gap-[5px] pt-[5px] pl-1">
          <PanelButton name="axemx" />
          <PanelButton name="axemy" />
          <PanelButton name="axemz" />
          <PanelButton name="axeu" off className="ml-[5px]" />
          <PanelButton name="axev" off />
          <PanelButton name="axew" off />
          <PanelButton name="axemu" off className="ml-[5px]" />
          <PanelButton name="axemv" off />
          <PanelButton name="axemw" off />
        </div>
        <h3 className="shrink-0 pt-3 pb-[5px] pl-[3px] leading-4">Vues définies par l'utilisateur :</h3>
        <div className="h-[253px] shrink-0 border-y border-r border-[#808388] bg-[#fbfbf3]" />
        <div className="flex shrink-0 gap-[5px] border-b border-[#a6a6ea] pt-[2px] pr-[3px] pb-1 pl-[3px]">
          <PanelButton name="nouvoeil" />
          <PanelButton name="listeoeil" off className="ml-1" />
          <PanelButton name="majoeil" off />
          <PanelButton name="suppoeil" off className="ml-auto" />
          <PanelButton name="supprimer" off />
        </div>
        <h3 className="mt-[5px] shrink-0 border-t border-[#808388] bg-[#d9e5fd] pl-[2px] leading-4 text-[#10107c]">Visibilités</h3>
        <div className="flex shrink-0 gap-[5px] pt-1 pl-1">
          <PanelButton name="scope1" off />
          <PanelButton name="scope2" off />
          <PanelButton name="scope3" />
          <PanelButton name="scope4" />
          <PanelButton name="scope5" className="ml-[5px]" />
          <PanelButton name="scope6" off />
          <PanelButton name="scope7" className="ml-[5px]" />
        </div>
        <div className="flex shrink-0 items-center gap-[2px] pt-3 pb-[6px] pl-[3px]">
          <Tick id="definies" checked blue />
          <label htmlFor="definies" className="leading-4">Définies par l'utilisateur / générées :</label>
        </div>
        <ul className="min-h-0 flex-1 border-y border-r border-[#808388] bg-[#fbfbf3] pt-px">
          {tree.map(row => <TreeRow key={row.text} row={row} />)}
        </ul>
        <div className="flex shrink-0 gap-[5px] pt-1 pl-1">
          <PanelButton name="scopenouv" />
          <PanelButton name="scopeplus" off className="ml-[5px]" />
          <PanelButton name="scopemoins" off />
          <PanelButton name="scopeegal" off />
          <PanelButton name="scopemaj" className="ml-1" />
          <PanelButton name="union" on className="ml-[5px]" />
          <PanelButton name="inter" />
          <PanelButton name="diff" />
        </div>
        <div className="flex shrink-0 items-center gap-[2px] pt-3 pb-[3px] pl-[3px] text-[#6d6d6d]">
          <Tick id="ajouter" disabled />
          <label htmlFor="ajouter" className="leading-4">Ajouter de nouveaux objets dans la visibilité :</label>
        </div>
        <div className="mb-1 ml-[3px] grid h-[21px] w-[251px] shrink-0 rounded-xs border border-[#adb2b5] bg-[#f4f4f4]">
          <select disabled aria-label="Visibilité" className="col-start-1 row-start-1 appearance-none" />
          <svg viewBox="0 0 7 4" className="col-start-1 row-start-1 mr-1 h-1 w-[7px] self-center justify-self-end"><path d="M0 0h7L3.500 4z" fill="#a0a0a0" /></svg>
        </div>
      </div>
    </div>
    <div className="flex h-6 shrink-0 items-start gap-[10px] pl-[5px] text-[11px] text-[#444a58]">
      <button type="button" className="flex h-[22px] items-center gap-px"><Icon name="tabdonnees" />Données</button>
      <button type="button" className="flex h-[22px] items-center gap-px"><Icon name="tabafficher" />Afficher</button>
      <button type="button" className="flex h-5 items-center rounded-b border border-t-0 border-[#bcd8dc] bg-[#f4f6fa] px-[2px]"><Icon name="tabvues" />Vues</button>
    </div>
  </aside>
)

/* ---------- structure ---------- */

// line 0..2 from back to front, i along the frame, level 0..2 upwards
const node = (line, i, level) => [432.5 + 149 * line + 50.6 * i, 654 + 43 * line - 7.9 * i - 172 * level]

const band = ([x1, y1], [x2, y2], a, b) => `M${x1} ${y1 + a}L${x2} ${y2 + a}V${y2 + b}L${x1} ${y1 + b}Z`

const Beam = ({ line, level, n }) => {
  const p = node(line, 0, level)
  const q = node(line, n, level)
  const outline = band([p[0], p[1]], [q[0] + 3, q[1]], -7, 7)
  return (
    <g>
      <path d={band(p, q, -7, -2)} fill="#36367f" />
      <path d={band(p, q, -4, 6)} fill="#5c5ce4" fillOpacity=".96" />
      <path d={`M${p[0]} ${p[1] + 6}L${q[0]} ${q[1] + 6}`} stroke="#2a2a6c" />
      {level === 1 && <path d={outline} stroke="#c4c0a8" strokeDasharray="1 1" fill="none" />}
      {level === 1 && <path d={`M${p[0]} ${p[1] - 4}L${q[0]} ${q[1] - 4}`} stroke="#a8a694" strokeDasharray="1 2" />}
    </g>
  )
}

const Purlins = ({ line, level, n }) =>
  Array.from({ length: n + 1 }, (_, i) => {
    const p = node(line, i, level)
    const q = node(line + 1, i, level)
    return (
      <g key={i}>
        <path d={band([p[0] + 4, p[1] + 1], [q[0] - 3, q[1] - 2], -4.5, 5)} fill="#5a5adc" />
        <path d={`M${p[0] + 4} ${p[1] - 3}L${q[0] - 3} ${q[1] - 6}`} stroke="#2d2d74" />
        <path d={`M${p[0] + 14} ${p[1] + 9}L${q[0] - 3} ${q[1] + 3}`} stroke="#3a3a94" strokeWidth=".8" />
      </g>
    )
  })

const Column = ({ line, i, level }) => {
  const [x, y] = node(line, i, 0)
  const h = 172 * level
  return (
    <g>
      <rect x={x - 8.5} y={y - h} width="17" height={h} fill="url(#steel)" fillOpacity=".93" />
      <path d={`M${x - 4} ${y - h}v${h}M${x + 4} ${y - h}v${h}`} stroke="#5353d2" strokeWidth="1" />
    </g>
  )
}

const Support = ({ line, i }) => {
  const [x, y] = node(line, i, 0)
  return (
    <g>
      <circle cx={x} cy={y + 8} r="7.500" fill="#087808" />
      <path d={`M${x} ${y + 8}L${x + 22} ${y + 24}L${x - 2} ${y + 28}L${x - 22} ${y + 23}Z`} fill="#008000" />
      <path d={`M${x} ${y + 8}l6 5q-6 4-12 0z`} fill="#00c000" />
    </g>
  )
}

const Feet = ({ line }) =>
  [0, 6, 12].map(i => {
    const [x, y] = node(line, i, 0)
    return <rect key={i} x={x - 2} y={y - 2} width="4" height="4" rx="1" fill="#ff0000" />
  })

const Brace = ({ i, level }) => {
  const a = node(0, i, level)
  const b = node(1, i, level)
  return (
    <g stroke="#3d3a58">
      <path d={`M${a[0] + 6} ${a[1] + 8}L${b[0] - 4} ${b[1] + 166}`} strokeWidth="2.500" />
      <path d={`M${b[0] - 6} ${b[1] + 6}L${a[0] + 6} ${a[1] + 166}`} strokeWidth="4.500" />
    </g>
  )
}

const Hinges = ({ line, level, n }) =>
  Array.from({ length: n + 1 }, (_, i) => {
    const [x, y] = node(line, i, level)
    const front = line === 0 || (line === 1 && level === 1)
    return (
      <g key={i}>
        <rect x={x - 2} y={y - 2} width="4" height="4" rx="1" fill="#ff0010" />
        {front && <circle cx={x + 4.5} cy={y} r="2.500" fill="#000" stroke="#b4dcf0" strokeWidth="1.300" />}
        {line > 0 && <circle cx={x - 4.5} cy={y - 2.5} r="2.500" fill="#000" stroke="#b4dcf0" strokeWidth="1.300" />}
      </g>
    )
  })

const Viewport = () => (
  <section className="relative min-h-0 flex-1 border-t border-r border-t-[#55585e] border-r-white bg-black">
    <svg viewBox="327 107 1058 673" className="h-full w-full" fill="none">
      <defs>
        <linearGradient id="steel">
          <stop offset="0" stopColor="#4848b8" />
          <stop offset=".2" stopColor="#5c5ce6" />
          <stop offset=".5" stopColor="#6464f4" />
          <stop offset=".85" stopColor="#6060dc" />
          <stop offset="1" stopColor="#4444a4" />
        </linearGradient>
      </defs>
      <Support line={0} i={0} /><Support line={0} i={6} /><Support line={0} i={12} />
      <Brace i={0} level={2} /><Brace i={0} level={1} />
      <Brace i={6} level={2} /><Brace i={6} level={1} />
      <Brace i={12} level={1} />
      <Column line={0} i={0} level={2} /><Column line={0} i={6} level={2} /><Column line={0} i={12} level={1} />
      <Feet line={0} />
      <Beam line={0} level={1} n={12} />
      <Purlins line={0} level={1} n={12} />
      <Hinges line={0} level={1} n={12} />
      <Beam line={0} level={2} n={6} />
      <Purlins line={0} level={2} n={6} />
      <Hinges line={0} level={2} n={6} />
      <Support line={1} i={0} /><Support line={1} i={6} /><Support line={1} i={12} />
      <Column line={1} i={0} level={2} /><Column line={1} i={6} level={2} /><Column line={1} i={12} level={1} />
      <Feet line={1} />
      <Beam line={1} level={1} n={12} />
      <Purlins line={1} level={1} n={12} />
      <Hinges line={1} level={1} n={12} />
      <Beam line={1} level={2} n={6} />
      <Hinges line={1} level={2} n={6} />
      <Support line={2} i={0} /><Support line={2} i={6} /><Support line={2} i={12} />
      <Column line={2} i={0} level={1} /><Column line={2} i={6} level={1} /><Column line={2} i={12} level={1} />
      <Feet line={2} />
      <Beam line={2} level={1} n={12} />
      <Hinges line={2} level={1} n={12} />
      {/* global axes */}
      <g strokeWidth="1.500">
        <path d="M432 654l26-3" stroke="#ff1010" /><path d="M467 650l-10-2 1 6z" fill="#ff1010" />
        <path d="M432 654l18 4" stroke="#10ff10" /><path d="M459 661l-10-6-1 6z" fill="#10ff10" />
        <path d="M432.500 654v32" stroke="#10e8ff" /><path d="M432.500 695l-3-10h6z" fill="#10e8ff" />
      </g>
      <g fontSize="10" fontFamily="Liberation Sans, sans-serif">
        <text x="470" y="652" fill="#b01010">X</text>
        <text x="459" y="667" fill="#10e010">Y</text>
        <text x="430" y="707" fill="#10e8ff">Z</text>
      </g>
    </svg>
    <p className="absolute top-[6px] left-[5px] font-['Liberation_Sans',Arial,sans-serif] text-[11px] leading-[14px] text-white">
      Mode de visibilité - Généré<br />
      CR1 : GZT (STR/GEO) - Ständig / vorübergehend - Gl. 6.10
    </p>
  </section>
)

/* ---------- results ---------- */

const results = [
  ['Total des charges dans X', '0.00', true],
  ["Total des forces d'appui dans X", '0.00', true],
  ['Total des charges dans Y', '0.00', false],
  ["Total des forces d'appui dans Y", '0.00', false],
  ['Total des charges dans Z', '84.14', true],
]

const tabs = [
  'Résultats - Résumé', 'Barres - Efforts internes', 'Ensemble de barres - Efforts internes', 'Sections - Efforts internes',
  "Nœuds - Forces d'appui", 'Nœuds - Déformations', 'Barres - Déformations locales',
]

const letterCell = 'border border-[#808080] border-b-[#606060] bg-[#e0e0e0] p-0 font-normal'
const cell = 'border border-[#a0a0a0] p-0'

const ResultsTable = () => (
  <table className="w-full flex-1 table-fixed border-collapse self-start text-[11px] leading-[14px] text-black">
    <colgroup>
      <col className="w-[46px]" /><col className="w-[287px]" /><col className="w-[72px]" /><col className="w-[48px]" /><col className="w-[396px]" /><col />
    </colgroup>
    <thead>
      <tr className="h-[15px]">
        <th rowSpan={2} className="border border-[#808080] bg-[#e0e0e0]"></th>
        <th className="border border-[#606060] bg-[#3399ff] p-0 font-normal text-white">A</th>
        <th className={letterCell}>B</th>
        <th className={letterCell}>C</th>
        <th className={letterCell}>D</th>
        <td className="border-y border-[#a0a0a0] bg-[#e0e0e0] p-0"></td>
      </tr>
      <tr className="h-4 bg-[#f0f0f0]">
        <th className={clsx(cell, 'font-normal')}>Description</th>
        <th className={clsx(cell, 'font-normal')}>Valeur</th>
        <th className={clsx(cell, 'font-normal')}>Unité</th>
        <th className={clsx(cell, 'font-normal')}>Commentaire</th>
        <td className="border-y border-[#a0a0a0] p-0"></td>
      </tr>
    </thead>
    <tbody>
      <tr className="h-4">
        <th className="border border-[#606060] bg-[#3399ff]"></th>
        <td colSpan={4} className="border border-[#a0a0a0] bg-white p-0 outline-1 -outline-offset-1 outline-black outline-dotted">
          <span className="flex items-center gap-[3px] pl-[2px] text-[12px] leading-[14px] font-bold">
            <svg viewBox="0 0 9 9" className="h-[9px] w-[9px]" fill="none"><path d="M.5.5h8v8h-8zM2 4.500h5" stroke="#000" /></svg>
            CC1 - Eigengewicht
          </span>
        </td>
        <td className="border-y border-[#a0a0a0] p-0"></td>
      </tr>
      {results.map(([name, value, tint]) => (
        <tr key={name} className={clsx('h-4', tint ? 'bg-[#f7f9ff]' : 'bg-white')}>
          <th className="border border-[#606060] bg-[#e0e0e0]"></th>
          <td className={cell}>
            <span className="flex h-[15px] items-center">
              <span className="ml-[7px] h-full border-l border-[#d8d8d8]" />
              <span className="mr-[7px] w-[11px] border-t border-[#d8d8d8]" />
              {name}
            </span>
          </td>
          <td className={clsx(cell, 'pr-1 text-right')}>{value}</td>
          <td className={clsx(cell, 'pl-[3px]')}>kN</td>
          <td className={cell}></td>
          <td className="border-y border-[#a0a0a0] bg-[#f0f0f0] p-0"></td>
        </tr>
      ))}
    </tbody>
  </table>
)

const Results = () => (
  <section className="flex shrink-0 flex-col">
    <div className="mt-[6px] flex h-5 items-center justify-between border-t border-[#e4e8ee] bg-[#b9c0cb] pr-[5px] pl-[3px] text-[11px] text-[#444a56]">
      <h2>4.0 Résultats - Résumé</h2>
      <PinClose />
    </div>
    <div className="flex h-[25px] items-center bg-linear-to-b from-[#eceff7] to-[#d0d5df] pl-2">
      {renderTools('res1 res2 res3 *res4 | res5 res6 | *res7 *res8 | res9 res10 | combo | prec suiv | filtre | infores | ~diagram | excel | calculette', true)}
    </div>
    <div className="border border-t-2 border-l-0 border-[#606468] bg-[#f0f0f0] font-['Liberation_Sans',Arial,sans-serif]">
      <div className="flex h-[147px] items-start gap-[2px] pt-px pr-[2px] pl-[2px]">
        <ResultsTable />
        <div className="flex h-[127px] w-[15px] shrink-0 flex-col items-center border-x border-white bg-[#f0f0f0]">
          <button type="button" aria-label="Haut" className="flex h-[18px] items-center"><svg viewBox="0 0 7 4" className="h-1 w-[7px]"><path d="M0 4h7L3.500 0z" fill="#404040" /></svg></button>
          <span className="h-[15px] w-[14px] rounded-xs border border-[#989898] bg-linear-to-r from-[#f4f4f4] to-[#c8c8c8]" />
          <button type="button" aria-label="Bas" className="mt-auto flex h-[18px] items-center"><svg viewBox="0 0 7 4" className="h-1 w-[7px]"><path d="M0 0h7L3.500 4z" fill="#404040" /></svg></button>
        </div>
      </div>
      <div className="flex h-[17px] justify-between">
        <div className="flex font-[Roboto,sans-serif] text-[11px] leading-[15px] text-black">
          {tabs.map((t, i) => (
            <button
              key={t}
              type="button"
              className={clsx(
                'rounded-b border-r border-b border-[#606468] whitespace-nowrap',
                i === 0 ? 'bg-[#f0f0f0] pr-[7px] pl-[3px]' : 'border-t bg-[#e2e2e2] pr-px pl-[2px]'
              )}
            >
              {t}
            </button>
          ))}
        </div>
        <span className="flex-1 border-t border-[#606468]" />
        <div className="flex border-t border-[#606468]">
          {['M3 2v7M10 2v7L5 5.500z', 'M8 2v7L3 5.500z', 'M4 2v7l5-3.500z', 'M2 2v7l5-3.500zM9 2v7'].map((d, i) => (
            <button key={d} type="button" aria-label={`Onglets ${i + 1}`} className="flex w-4 items-center justify-center border border-t-white border-r-[#808080] border-b-[#808080] border-l-white">
              <svg viewBox="0 0 12 11" className="h-[11px] w-3"><path d={d} fill={i < 2 ? '#a0a0a0' : '#000'} stroke={i < 2 ? '#a0a0a0' : '#000'} /></svg>
            </button>
          ))}
        </div>
      </div>
    </div>
    <div className="mt-px mb-px h-[17px] border border-white bg-[#f0eceb]" />
  </section>
)

const statusKeys = [['SAISIE', true], ['GRILLE', false], ['CARTES', true], ["SAISIE D'OB.", true], ['GLIGNES', true], ['DXF', true]]

const StatusBar = () => (
  <footer className="flex h-5 shrink-0 items-center border-t border-[#8d929c] bg-linear-to-b from-[#dcdfe5] via-[#b0b4bc] to-[#c0c4cb] font-['Liberation_Sans',Arial,sans-serif] text-[11px] text-[#20242c]">
    <div className="flex flex-1 justify-end gap-[2px]">
      {statusKeys.map(([k, down]) => (
        <button
          key={k}
          type="button"
          className={clsx(
            'h-[18px] border leading-4 whitespace-nowrap',
            k === 'CARTES' ? 'px-[5px]' : 'px-px',
            down ? 'border-t-black border-r-white border-b-white border-l-black bg-[#aeb2ba]' : 'border-t-white border-r-[#808590] border-b-[#808590] border-l-white bg-[#c0c4cc]'
          )}
        >
          {k}
        </button>
      ))}
    </div>
    <div className="flex w-[480px] items-center pl-[3px]">
      <span className="w-[151px]">Mode de visil</span>
      <span className="h-4 w-[88px] border-l border-[#92979f]" />
      <span className="h-4 w-[74px] border-l border-[#92979f]" />
      <span className="h-4 w-[75px] border-l border-[#92979f]" />
      <span className="h-4 flex-1 border-l border-[#92979f]" />
      <svg viewBox="0 0 11 11" className="mt-1 h-[11px] w-[11px]" fill="#6c717b"><path d="M8 0h2v2H8zM4 4h2v2H4zM8 4h2v2H8zM0 8h2v2H0zM4 8h2v2H4zM8 8h2v2H8z" /></svg>
    </div>
  </footer>
)

export default function App() {
  return (
    <div className="flex h-screen flex-col rounded-t-md border border-[#20242c] bg-linear-to-b from-[#c9dcf0] via-[#b4cfe9] to-[#a9c8e8] px-[6px] pb-[6px] font-['Open_Sans',sans-serif]">
      <TitleBar />
      <div className="flex min-h-0 flex-1 flex-col border border-[#5a6672] bg-[#cfd3dd]">
        <MenuBar />
        <Toolbars />
        <main className="flex min-h-0 flex-1">
          <Navigator />
          <div className="ml-[5px] flex min-w-0 flex-1 flex-col border-l border-[#808590]">
            <Viewport />
            <Results />
          </div>
        </main>
        <StatusBar />
      </div>
    </div>
  )
}
